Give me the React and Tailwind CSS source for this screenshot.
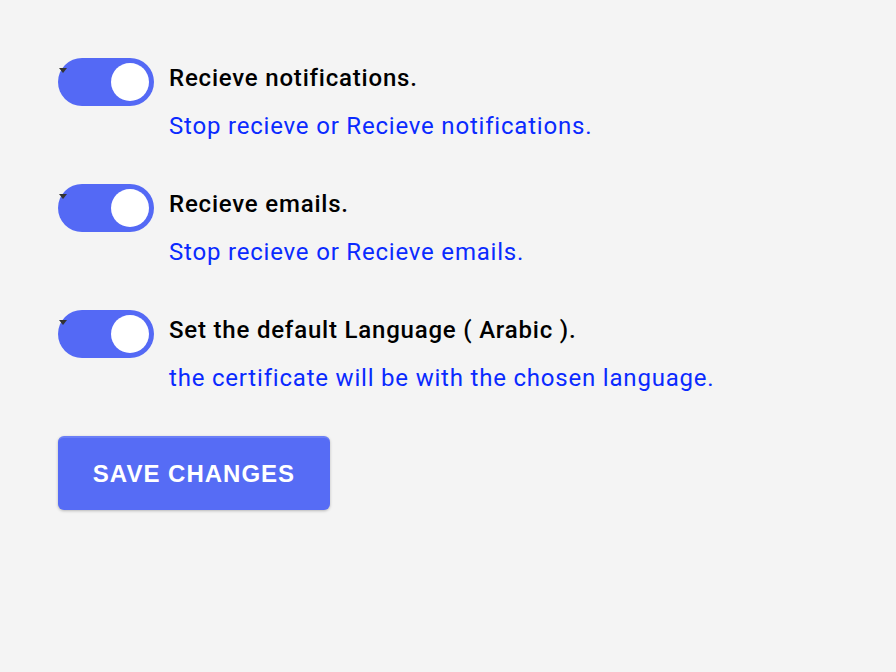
import { useState } from "react";

const items = [
  { title: "Recieve notifications.", desc: "Stop recieve or Recieve notifications." },
  { title: "Recieve emails.", desc: "Stop recieve or Recieve emails." },
  { title: "Set the default Language ( Arabic ).", desc: "the certificate will be with the chosen language." },
];

function Toggle({ on, onChange }) {
  return (
    <button
      onClick={onChange}
      className={`relative w-[96px] h-[48px] rounded-full shrink-0 ${on ? "bg-[#5469f5]" : "bg-gray-300"}`}
    >
      <span className="absolute left-[1px] top-[10px] w-0 h-0 border-l-[4px] border-r-[4px] border-t-[5px] border-l-transparent border-r-transparent border-t-[#333]" />
      <span
        className={`absolute top-[5px] w-[38px] h-[38px] rounded-full bg-white ${on ? "left-[53px]" : "left-[5px]"}`}
      />
    </button>
  );
}

export default function App() {
  const [state, setState] = useState([true, true, true]);

  return (
    <div className="min-h-screen bg-[#f4f4f4] px-[58px] pt-[58px] font-['Roboto',sans-serif]">
      <div className="flex flex-col gap-[42px]">
        {items.map((item, i) => (
          <div key={i} className="flex gap-[15px]">
            <Toggle
              on={state[i]}
              onChange={() => setState(state.map((s, j) => (j === i ? !s : s)))}
            />
            <div className="pt-[4px] tracking-[0.8px]">
              <p className="text-[24px] leading-[32px] font-medium text-black">{item.title}</p>
              <p className="mt-[16px] text-[24px] leading-[32px] text-[#0a2aff]">{item.desc}</p>
            </div>
          </div>
        ))}
      </div>
      <button className="mt-[42px] w-[272px] h-[74px] rounded-[6px] bg-[#566cf5] border-t-2 border-[#6b7ff7] shadow-[0_1px_3px_rgba(0,0,0,0.25)] text-white text-[24px] tracking-[1px] font-bold uppercase font-['Liberation_Sans',Arial,sans-serif]">
        Save changes
      </button>
    </div>
  );
}
